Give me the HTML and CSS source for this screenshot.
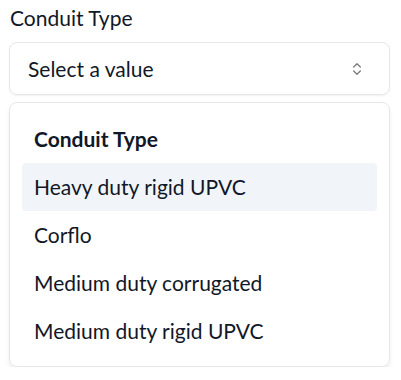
FILE: index.html
```html
<!DOCTYPE html>
<html>
<head>
<meta charset="utf-8">
<link rel="stylesheet" href="styles.css">
</head>
<body>
<div class="wrap">
  <div class="label">Conduit Type</div>
  <div class="select">
    <span class="value">Select a value</span>
    <svg class="chev" width="16" height="16" viewBox="0 0 24 24" fill="none" stroke="currentColor" stroke-width="2" stroke-linecap="round" stroke-linejoin="round"><path d="m7 15 5 5 5-5"/><path d="m7 9 5-5 5 5"/></svg>
  </div>
  <div class="popover">
    <div class="group">Conduit Type</div>
    <div class="item active">Heavy duty rigid UPVC</div>
    <div class="item">Corflo</div>
    <div class="item">Medium duty corrugated</div>
    <div class="item">Medium duty rigid UPVC</div>
  </div>
</div>
</body>
</html>
```
FILE: styles.css
```css
html, body {
  margin: 0;
  padding: 0;
  background: #ffffff;
}
body {
  font-family: Lato, "Noto Sans", sans-serif;
  color: #111827;
}
.wrap {
  padding: 5px 11px 0 9px;
  width: 381px;
}
.label {
  font-size: 21px;
  line-height: 26px;
  padding-left: 1px;
  margin-bottom: 11px;
}
.select {
  height: 51px;
  border: 1px solid #e5e7eb;
  border-radius: 8px;
  box-shadow: 0 1px 2px rgba(0,0,0,0.06);
  display: flex;
  align-items: center;
  justify-content: space-between;
  padding: 0 24px 0 18px;
}
.value {
  font-size: 21px;
}
.chev {
  color: #7b7b80;
}
.popover {
  margin-top: 7px;
  border: 1px solid #e5e7eb;
  border-radius: 8px;
  box-shadow: 0 4px 6px -1px rgba(0,0,0,0.08), 0 2px 4px -2px rgba(0,0,0,0.06);
  padding: 12px 12px 11px 12px;
  display: flex;
  flex-direction: column;
}
.group {
  font-size: 21px;
  font-weight: 700;
  height: 48px;
  line-height: 48px;
  padding-left: 12px;
}
.item {
  font-size: 21px;
  height: 48px;
  line-height: 48px;
  padding-left: 12px;
  border-radius: 4px;
}
.item.active {
  background: #f1f5f9;
}
```
